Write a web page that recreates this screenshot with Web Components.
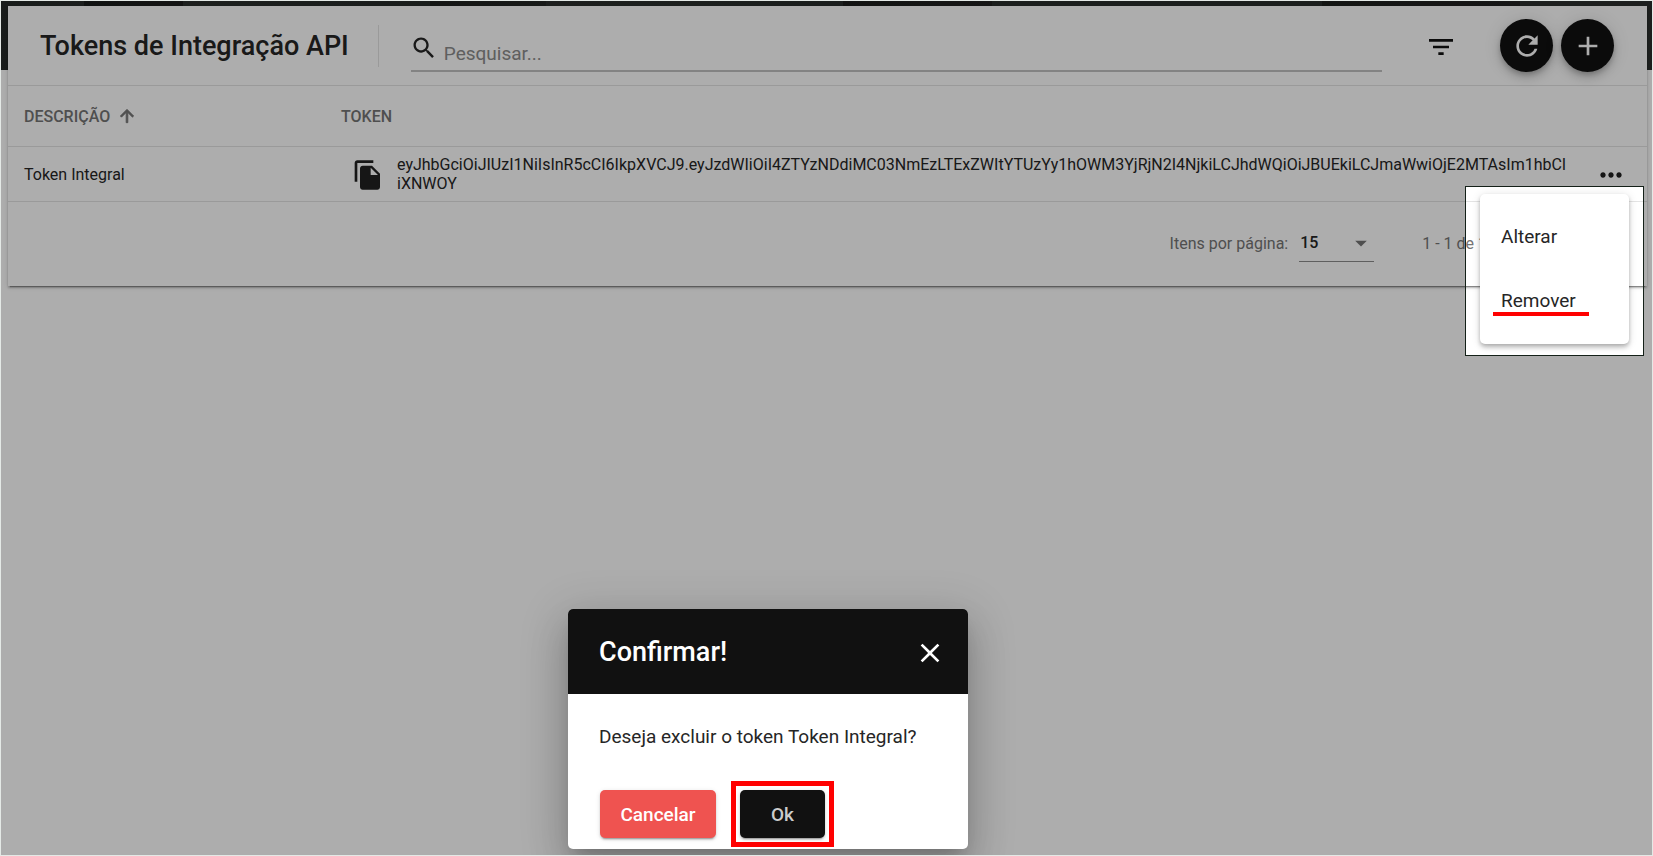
<!DOCTYPE html>
<html lang="pt-BR">
<head>
<meta charset="utf-8">
<meta name="viewport" content="width=device-width, initial-scale=1">
<title>Tokens de Integração API</title>
<style>
  :root {
    --ink: #262626;
    --muted: #757575;
    --line: #e4e4e4;
    --primary: #111;
    --warn: #ef5350;
    --mark: #f00;
  }
  html, body { height:100%; margin:0; }
  body { font-family:Roboto, sans-serif; font-size:16px; color:var(--ink); background:#e4e9e6; }
</style>
</head>
<body>
<token-app>
  <token-toolbar heading="Tokens de Integração API"></token-toolbar>
  <token-table></token-table>
  <token-paginator></token-paginator>
  <row-menu slot="overlay"></row-menu>
  <confirm-dialog slot="overlay" heading="Confirmar!">Deseja excluir o token Token Integral?</confirm-dialog>
</token-app>

<script>
const ICONS = {
  search: 'M15.5 14h-.79l-.28-.27C15.41 12.59 16 11.11 16 9.5 16 5.91 13.09 3 9.5 3S3 5.91 3 9.5 5.91 16 9.5 16c1.61 0 3.09-.59 4.23-1.57l.27.28v.79l5 4.99L20.49 19l-4.99-5zm-6 0C7.01 14 5 11.99 5 9.5S7.01 5 9.5 5 14 7.01 14 9.5 11.99 14 9.5 14z',
  filter_list: 'M10 18h4v-2h-4v2zM3 6v2h18V6H3zm3 7h12v-2H6v2z',
  refresh: 'M17.65 6.35C16.2 4.9 14.21 4 12 4c-4.42 0-7.99 3.58-7.99 8s3.57 8 7.99 8c3.73 0 6.84-2.55 7.73-6h-2.08c-.82 2.33-3.04 4-5.65 4-3.31 0-6-2.69-6-6s2.69-6 6-6c1.66 0 3.14.69 4.22 1.78L13 11h7V4l-2.35 2.35z',
  add: 'M19 13h-6v6h-2v-6H5v-2h6V5h2v6h6v2z',
  arrow_upward: 'M4 12l1.41 1.41L11 7.83V20h2V7.83l5.58 5.59L20 12l-8-8-8 8z',
  file_copy: 'M16 1H4c-1.1 0-2 .9-2 2v14h2V3h12V1zm-1 4l6 6v10c0 1.1-.9 2-2 2H7.99C6.89 23 6 22.1 6 21l.01-14c0-1.1.89-2 1.99-2h7zm-1 7h5.5L14 6.5V12z',
  more_horiz: 'M6 10c-1.1 0-2 .9-2 2s.9 2 2 2 2-.9 2-2-.9-2-2-2zm12 0c-1.1 0-2 .9-2 2s.9 2 2 2 2-.9 2-2-.9-2-2-2zm-6 0c-1.1 0-2 .9-2 2s.9 2 2 2 2-.9 2-2-.9-2-2-2z',
  close: 'M19 6.41L17.59 5 12 10.59 6.41 5 5 6.41 10.59 12 5 17.59 6.41 19 12 13.41 17.59 19 19 17.59 13.41 12z',
  arrow_drop_down: 'M7 10l5 5 5-5z'
};

// md-icon - material glyph, size comes from font-size
class MdIcon extends HTMLElement {
  constructor() {
    super();
    this.attachShadow({ mode: 'open' });
  }

  connectedCallback() {
    this.shadowRoot.innerHTML = `
      <style>
        :host { display:inline-block; flex:none; width:1em; height:1em; }
        svg { display:block; width:100%; height:100%; fill:currentColor; }
        :host([bold]) svg { stroke:currentColor; stroke-width:1; }
      </style>
      <svg viewBox="0 0 24 24" aria-hidden="true"><path d="${ICONS[this.getAttribute('name')]}"/></svg>
    `;
  }
}

// token-app - page frame, banner behind the card and the overlay layer
class TokenApp extends HTMLElement {
  constructor() {
    super();
    this.attachShadow({ mode: 'open' });
  }

  connectedCallback() {
    this.shadowRoot.innerHTML = `
      <style>
        :host { display:block; height:100%; padding:1px; box-sizing:border-box; }
        .page {
          position:relative;
          height:100%;
          box-sizing:border-box;
          padding:5px 5px 5px 7px;
          overflow:hidden;
          background:
            linear-gradient(90deg, #252a28, #2a2e2c 5%, #1a1c1b 5%, #1e1e1e 11%, #2c302e 11%, #272c2a 26%, #1e201e 26%, #252826 33%, #2c302e 33%, #292e2c 51%, #1c1e1c 51%, #222 60%, #2a2e2c 60%, #2a2e2c 80%, #1e201e 80%, #222 92%, #2c302e 92%) no-repeat 0 0 / 100% 69px,
            #fff;
        }
        .card {
          background:#fff;
          box-shadow:0 3px 1px -2px rgba(0,0,0,.3), 0 2px 2px rgba(0,0,0,.2), 0 1px 5px rgba(0,0,0,.12);
        }
      </style>
      <div class="page">
        <main class="card"><slot></slot></main>
        <slot name="overlay"></slot>
      </div>
    `;
  }
}

class TokenToolbar extends HTMLElement {
  constructor() {
    super();
    this.attachShadow({ mode: 'open' });
  }

  connectedCallback() {
    this.shadowRoot.innerHTML = `
      <style>
        :host { display:flex; align-items:center; height:79px; padding:0 33px 0 32px; border-bottom:1px solid var(--line); }
        h1 { margin:0; font-size:27px; font-weight:500; line-height:32px; }
        .divider { width:1px; height:42px; margin:0 32px 0 29px; background:var(--line); }
        label { flex:1; display:flex; gap:6px; height:36px; margin-top:14px; border-bottom:2px solid #c2c2c2; }
        label md-icon { font-size:28px; margin-left:-1px; }
        input { flex:1; min-width:0; border:0; outline:0; padding:4px 0 0; background:none; font:inherit; font-size:19px; color:inherit; }
        input::placeholder { color:#8c8c8c; opacity:1; }
        button { display:flex; align-items:center; justify-content:center; border:0; padding:0; cursor:pointer; font-size:32px; }
        .filter { margin:2px 43px 0; background:none; color:#111; }
        .fab {
          width:53px; height:53px; border-radius:50%; background:var(--primary); color:#fff;
          box-shadow:0 3px 5px -1px rgba(0,0,0,.2), 0 6px 10px rgba(0,0,0,.14), 0 1px 18px rgba(0,0,0,.12);
        }
        .fab + .fab { margin-left:8px; }
      </style>
      <h1>${this.getAttribute('heading')}</h1>
      <span class="divider"></span>
      <label for="search">
        <md-icon name="search"></md-icon>
        <input id="search" type="text" placeholder="Pesquisar..." aria-label="Pesquisar">
      </label>
      <button class="filter" aria-label="Filtrar"><md-icon name="filter_list"></md-icon></button>
      <button class="fab" aria-label="Atualizar"><md-icon name="refresh"></md-icon></button>
      <button class="fab" aria-label="Adicionar"><md-icon name="add"></md-icon></button>
    `;
  }
}

class TokenTable extends HTMLElement {
  constructor() {
    super();
    this.attachShadow({ mode: 'open' });
  }

  connectedCallback() {
    this.shadowRoot.innerHTML = `
      <style>
        :host { display:block; }
        table { width:100%; border-collapse:separate; border-spacing:0; table-layout:fixed; }
        th, td { padding:0; text-align:left; border-bottom:1px solid var(--line); }
        th { height:60px; font-weight:500; color:var(--muted); }
        td { height:54px; line-height:19px; }
        th:first-child, td:first-child { width:317px; padding-left:16px; }
        th:last-child, td:last-child { width:78px; }
        .sort { display:flex; align-items:center; gap:7px; }
        .sort md-icon { font-size:20px; }
        .token { display:flex; align-items:center; gap:13px; padding-left:11px; }
        .token span { word-break:break-all; }
        button { display:flex; border:0; padding:2px 0 0; background:none; color:#212121; cursor:pointer; font-size:32px; }
        .more { margin-left:26px; }
      </style>
      <table>
        <thead>
          <tr>
            <th aria-sort="ascending"><span class="sort">DESCRIÇÃO <md-icon name="arrow_upward" bold></md-icon></span></th>
            <th>TOKEN</th>
            <th></th>
          </tr>
        </thead>
        <tbody>
          <tr>
            <td>Token Integral</td>
            <td>
              <div class="token">
                <button class="copy" aria-label="Copiar"><md-icon name="file_copy"></md-icon></button>
                <span>eyJhbGciOiJIUzI1NiIsInR5cCI6IkpXVCJ9.eyJzdWIiOiI4ZTYzNDdiMC03NmEzLTExZWItYTUzYy1hOWM3YjRjN2I4NjkiLCJhdWQiOiJBUEkiLCJmaWwiOjE2MTAsIm1hbCIiXNWOY</span>
              </div>
            </td>
            <td><button class="more" aria-label="Ações"><md-icon name="more_horiz"></md-icon></button></td>
          </tr>
        </tbody>
      </table>
    `;
  }
}

class TokenPaginator extends HTMLElement {
  constructor() {
    super();
    this.attachShadow({ mode: 'open' });
  }

  connectedCallback() {
    this.shadowRoot.innerHTML = `
      <style>
        :host { display:flex; align-items:center; justify-content:flex-end; height:82px; padding:0 160px 2px 0; color:var(--muted); }
        .size { position:relative; display:flex; align-items:center; margin:0 48px 0 11px; width:75px; height:36px; border-bottom:1px solid #8c8c8c; }
        select { appearance:none; width:100%; height:100%; border:0; padding:0 0 0 1px; background:none; font:inherit; font-weight:500; color:var(--ink); }
        .size md-icon { position:absolute; right:-1px; font-size:28px; pointer-events:none; }
      </style>
      <label for="size">Itens por página:</label>
      <span class="size">
        <select id="size"><option>15</option><option>30</option><option>50</option></select>
        <md-icon name="arrow_drop_down"></md-icon>
      </span>
      <span>1 - 1 de 1</span>
    `;
  }
}

// row-menu - open actions menu, its frame stays lit while the rest is dimmed
class RowMenu extends HTMLElement {
  constructor() {
    super();
    this.attachShadow({ mode: 'open' });
  }

  connectedCallback() {
    this.shadowRoot.innerHTML = `
      <style>
        :host {
          position:absolute; top:185px; right:8px; padding:7px 14px 11px;
          border:1px solid #142018;
          box-shadow:0 0 0 3000px rgba(0,0,0,.32);
        }
        .menu {
          width:149px; padding:10px 0 12px; box-sizing:border-box; border-radius:5px; background:#fff;
          box-shadow:0 2px 4px -1px rgba(0,0,0,.2), 0 4px 5px rgba(0,0,0,.14), 0 1px 10px rgba(0,0,0,.12);
        }
        button { position:relative; display:block; width:100%; height:64px; border:0; padding:0 21px; background:none; text-align:left; font:inherit; font-size:19px; color:var(--ink); cursor:pointer; }
        .marked::after { content:''; position:absolute; left:13px; right:40px; bottom:16px; height:4px; background:var(--mark); }
      </style>
      <div class="menu" role="menu">
        <button role="menuitem">Alterar</button>
        <button role="menuitem" class="marked">Remover</button>
      </div>
    `;
  }
}

class ConfirmDialog extends HTMLElement {
  constructor() {
    super();
    this.attachShadow({ mode: 'open' });
  }

  connectedCallback() {
    this.shadowRoot.innerHTML = `
      <style>
        :host {
          position:absolute; bottom:6px; left:567px; width:400px;
          border-radius:5px; background:#fff; overflow:hidden;
          box-shadow:0 11px 15px -7px rgba(0,0,0,.2), 0 24px 38px 3px rgba(0,0,0,.14), 0 9px 46px 8px rgba(0,0,0,.12);
        }
        header { display:flex; align-items:center; justify-content:space-between; height:85px; padding:0 22px 0 31px; background:var(--primary); color:#fff; }
        h2 { margin:0; font-size:27px; font-weight:500; line-height:32px; }
        button { border:0; padding:0; font:inherit; cursor:pointer; }
        .close { display:flex; padding-top:2px; background:none; color:inherit; font-size:32px; }
        p { margin:0; padding:31px 31px 0; font-size:19px; line-height:24px; }
        .actions { display:flex; align-items:center; gap:15px; padding:32px 32px 2px; }
        .actions button { height:48px; border-radius:5px; font-size:19px; font-weight:500; color:#fff; box-shadow:0 3px 1px -2px rgba(0,0,0,.2), 0 2px 2px rgba(0,0,0,.14), 0 1px 5px rgba(0,0,0,.12); }
        .cancel { width:116px; background:var(--warn); }
        .mark { padding:4px; border:5px solid var(--mark); }
        .actions .ok { display:block; width:85px; background:var(--primary); color:#ccc; }
      </style>
      <header>
        <h2>${this.getAttribute('heading')}</h2>
        <button class="close" aria-label="Fechar"><md-icon name="close"></md-icon></button>
      </header>
      <p><slot></slot></p>
      <div class="actions">
        <button class="cancel">Cancelar</button>
        <span class="mark"><button class="ok">Ok</button></span>
      </div>
    `;
  }
}

customElements.define('md-icon', MdIcon);
customElements.define('token-app', TokenApp);
customElements.define('token-toolbar', TokenToolbar);
customElements.define('token-table', TokenTable);
customElements.define('token-paginator', TokenPaginator);
customElements.define('row-menu', RowMenu);
customElements.define('confirm-dialog', ConfirmDialog);
</script>
</body>
</html>
